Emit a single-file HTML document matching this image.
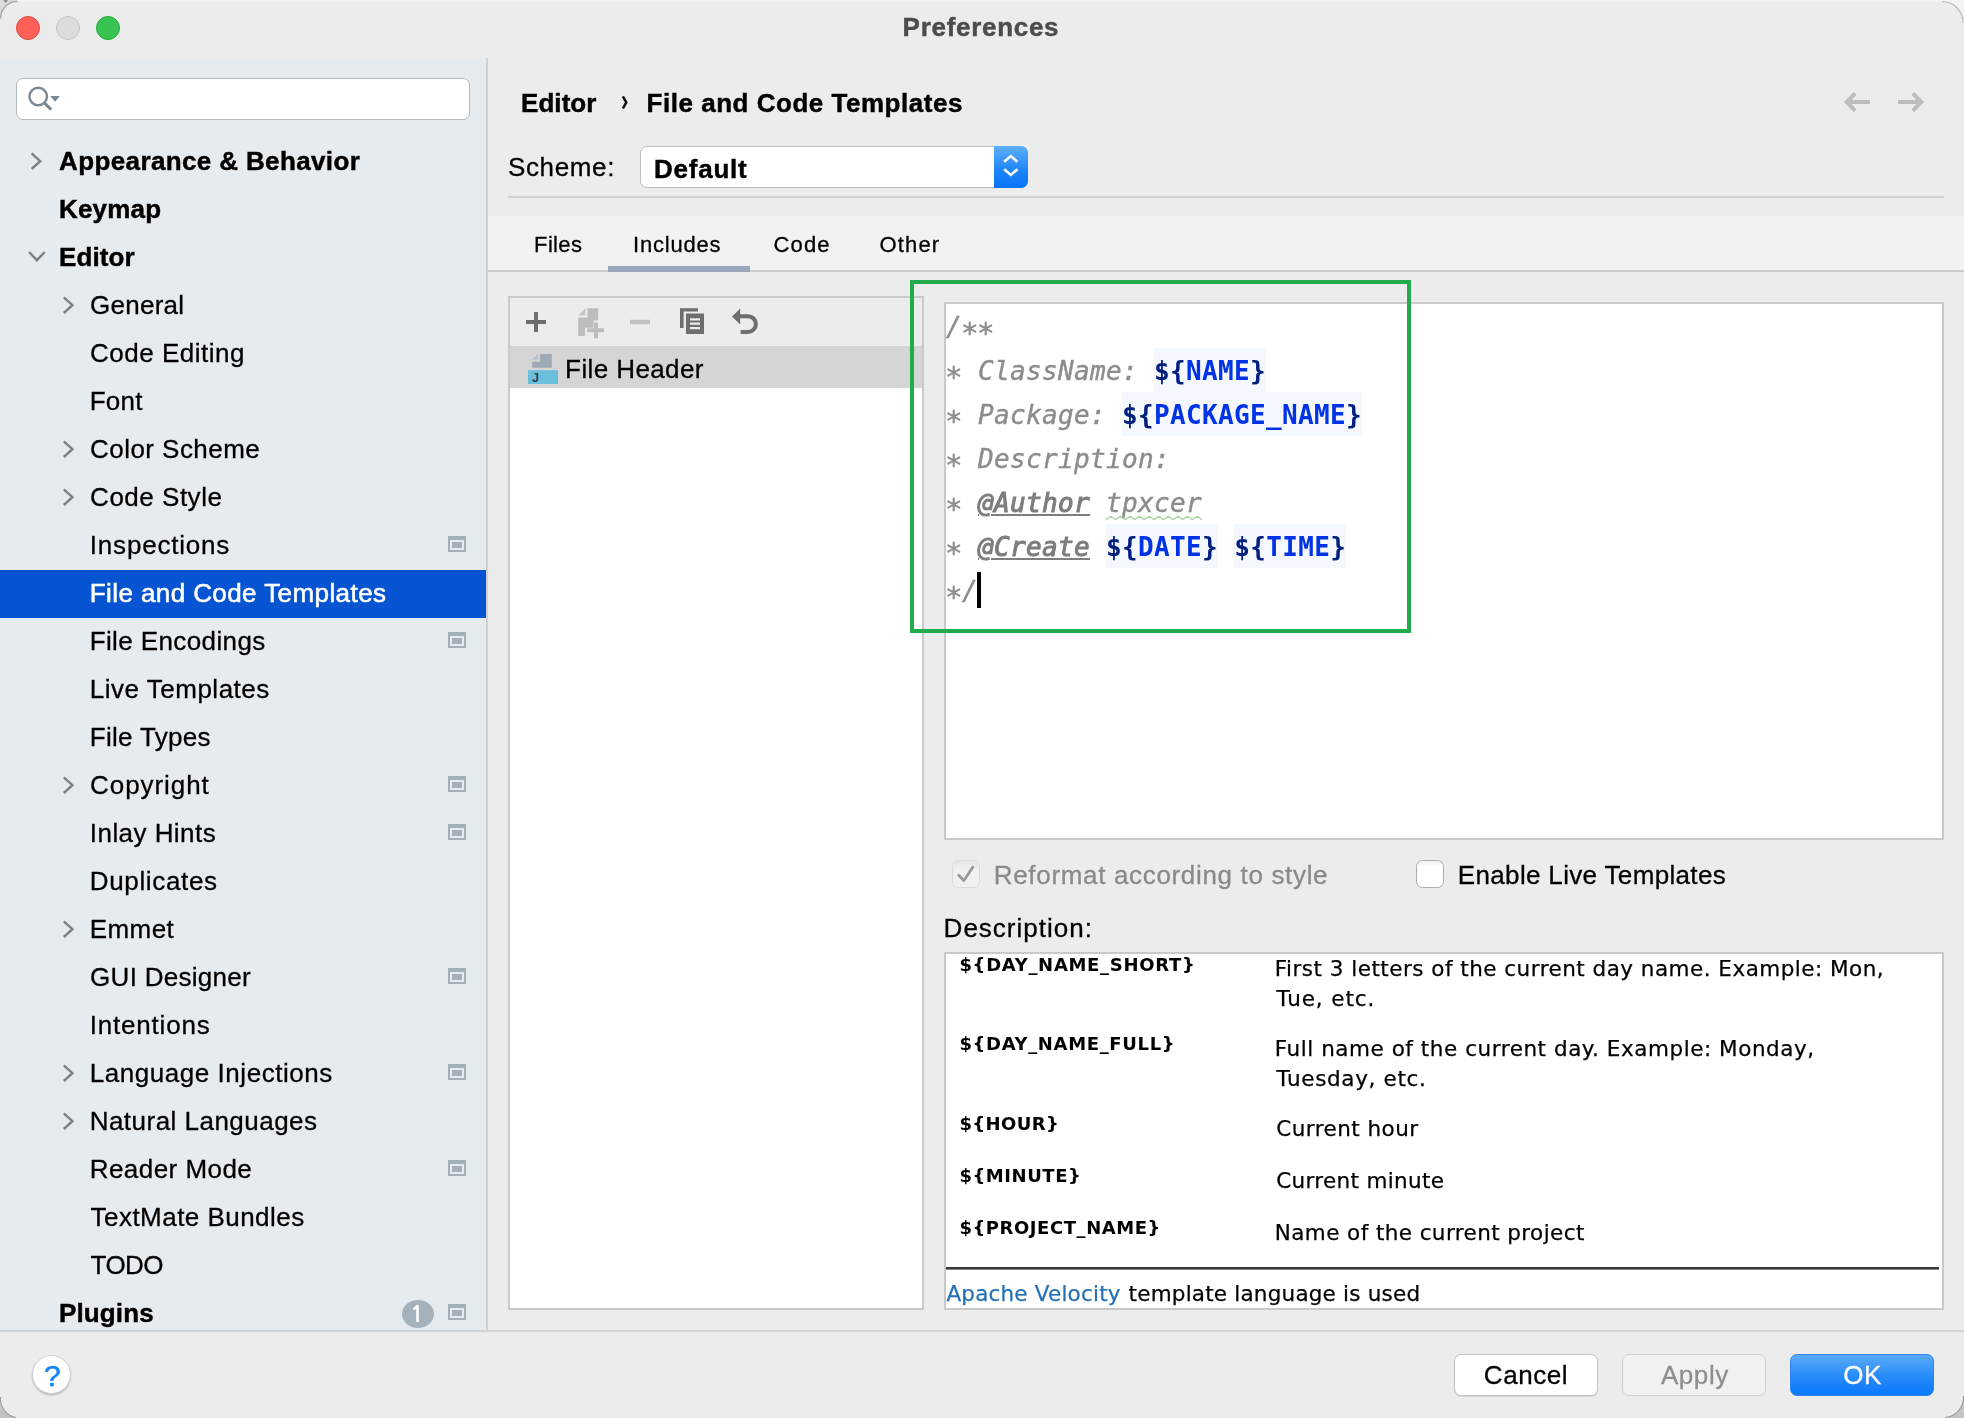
<!DOCTYPE html>
<html lang="en">
<head>
<meta charset="utf-8">
<title>Preferences</title>
<style>
html,body{margin:0;padding:0}
body{width:1964px;height:1418px;overflow:hidden;background:#ececec;position:relative;font-family:"Liberation Sans",sans-serif;font-size:26px;color:#000}
.a{position:absolute;box-sizing:border-box}
.t{position:absolute;white-space:pre;display:block}
svg{position:absolute;overflow:visible}
.code{will-change:transform;position:absolute;left:946px;top:305.3px;font:400 26px/44px "DejaVu Sans Mono","Liberation Mono",monospace;letter-spacing:.35px;white-space:pre;color:#8c8c8c}
.code div{height:44px}
.code i{font-style:italic;-webkit-text-stroke:.4px}
.code .as{display:inline-block;width:16px;transform:translateY(5.5px) scale(1.12);transform-origin:50% 50%}
.code b{font-weight:700;color:#00207f;font-style:normal}
.code b u{text-decoration:none;color:#0033e6}
.hl{position:absolute;height:44px;background:#f5f8fe}
.code .tag{font-weight:400;font-style:italic;color:#7d7d7d;-webkit-text-stroke:1px;text-decoration:underline;text-decoration-thickness:1.6px;text-underline-offset:1.6px}
.code .typo{}
</style>
</head>
<body>
<!-- window chrome -->
<div class="a" style="left:0;top:0;width:1964px;height:2px;background:linear-gradient(#f6f6f6,#efefef)"></div>
<svg style="left:0;top:0" width="1964" height="1418" viewBox="0 0 1964 1418">
<path d="M0 0 H17 A17 17 0 0 0 0 18.5 Z" fill="#dcdcdc"/><path d="M17.5 1.2 A17 17 0 0 0 0.6 18.5" fill="none" stroke="#a6a6a6" stroke-width="1.4"/><path d="M3.5 0 L8 0 L6.5 2.2 Q4.8 3.4 4.2 1.6 Z" fill="#8d8d8d"/>
<path d="M1964 0 H1942 A21 21 0 0 1 1963 22 L1964 22 Z" fill="#f3f3f3"/><path d="M1942 1.5 A21 21 0 0 1 1963 23" fill="none" stroke="#b8b8b8" stroke-width="1.2"/>
<path d="M0 1418 V1397 A19 19 0 0 0 16 1418 Z" fill="#c2c2c2"/><path d="M0.5 1397 A19 19 0 0 0 16 1417.5" fill="none" stroke="#9a9a9a" stroke-width="1.2"/>
<path d="M1964 1418 V1396 A20 20 0 0 1 1945 1418 Z" fill="#c4c4c4"/><path d="M1963.5 1396 A20 20 0 0 1 1945 1417.5" fill="none" stroke="#9c9c9c" stroke-width="1.2"/>
</svg>
<div class="a" style="left:16px;top:15.5px;width:24px;height:24px;border-radius:50%;background:#ff6159;border:1px solid #e2463e"></div>
<div class="a" style="left:56px;top:15.5px;width:24px;height:24px;border-radius:50%;background:#dcdcdc;border:1px solid #c4c4c4"></div>
<div class="a" style="left:96px;top:15.5px;width:24px;height:24px;border-radius:50%;background:#39c352;border:1px solid #22ab31"></div>

<!-- sidebar -->
<div class="a" style="left:0;top:58px;width:488px;height:1272px;background:#e6ebf0;border-right:2px solid #d0d0d0"></div>
<div class="a" style="left:16px;top:78px;width:454px;height:41.5px;background:#fff;border:1.6px solid #b3b8bd;border-radius:7px"></div>
<svg style="left:24px;top:82px" width="40" height="32" viewBox="0 0 40 32"><circle cx="14.2" cy="14.5" r="8.8" fill="none" stroke="#7d8891" stroke-width="2.4"/><path d="M20.6 21.2 L27.2 27.6" stroke="#7d8891" stroke-width="3" fill="none"/><path d="M26.2 14 L35.8 14 L31 19.8 Z" fill="#7d8891"/></svg>
<div class="a" style="left:0;top:570px;width:486px;height:48px;background:#0654d1"></div>
<svg style="left:0;top:0" width="100" height="1330" viewBox="0 0 100 1330"><g fill="none" stroke="#7f7f7f" stroke-width="2.4"><path d="M31.6 153.4 L40.2 161.2 L31.6 169.0"/><path d="M29.1 252.0 L36.9 260.2 L44.7 252.0"/><path d="M63.8 297.4 L72.4 305.2 L63.8 313.0"/><path d="M63.8 441.4 L72.4 449.2 L63.8 457.0"/><path d="M63.8 489.4 L72.4 497.2 L63.8 505.0"/><path d="M63.8 777.4 L72.4 785.2 L63.8 793.0"/><path d="M63.8 921.4 L72.4 929.2 L63.8 937.0"/><path d="M63.8 1065.4 L72.4 1073.2 L63.8 1081.0"/><path d="M63.8 1113.4 L72.4 1121.2 L63.8 1129.0"/></g></svg>
<svg style="left:0;top:0" width="486" height="1330" viewBox="0 0 486 1330"><g fill="#a4b1b9"><path d="M448 536h18v16h-18z M450 540v10h14v-10z M452 542h10v6h-10z" fill-rule="evenodd"/><path d="M448 632h18v16h-18z M450 636v10h14v-10z M452 638h10v6h-10z" fill-rule="evenodd"/><path d="M448 776h18v16h-18z M450 780v10h14v-10z M452 782h10v6h-10z" fill-rule="evenodd"/><path d="M448 824h18v16h-18z M450 828v10h14v-10z M452 830h10v6h-10z" fill-rule="evenodd"/><path d="M448 968h18v16h-18z M450 972v10h14v-10z M452 974h10v6h-10z" fill-rule="evenodd"/><path d="M448 1064h18v16h-18z M450 1068v10h14v-10z M452 1070h10v6h-10z" fill-rule="evenodd"/><path d="M448 1160h18v16h-18z M450 1164v10h14v-10z M452 1166h10v6h-10z" fill-rule="evenodd"/><path d="M448 1304h18v16h-18z M450 1308v10h14v-10z M452 1310h10v6h-10z" fill-rule="evenodd"/></g><ellipse cx="418" cy="1314" rx="16" ry="14" fill="#a6b2bb"/></svg>

<!-- bottom bar -->
<div class="a" style="left:0;top:1330px;width:1964px;height:2px;background:#d2d2d2"></div>
<div class="a" style="left:31.6px;top:1355.2px;width:39px;height:39px;border-radius:50%;background:#fff;border:1px solid #d0d0d0;box-shadow:0 1.5px 2px rgba(0,0,0,.2)"></div>
<div class="a" style="left:1454px;top:1354px;width:144px;height:42px;border-radius:7px;background:#fff;border:1.5px solid #c2c2c2;box-shadow:0 1px 1px rgba(0,0,0,.10)"></div>
<div class="a" style="left:1622px;top:1354px;width:144px;height:42px;border-radius:7px;background:#f1f1f1;border:1.5px solid #d0d0d0"></div>
<div class="a" style="left:1790px;top:1354px;width:144px;height:42px;border-radius:7px;background:linear-gradient(#5caaf8,#2a8df9 50%,#0a78fb);border:1px solid #2a86f0"></div>

<!-- header -->
<svg style="left:616px;top:94px" width="18" height="18" viewBox="0 0 18 18"><path d="M6.9 2.3 L10.3 8.4 L6.9 14.5" fill="none" stroke="#111" stroke-width="2.5"/></svg>
<svg style="left:1840px;top:88px" width="90" height="28" viewBox="0 0 90 28"><g fill="none" stroke="#bdbdbd" stroke-width="4"><path d="M30 14 H7.5 M15.2 5.4 L6.6 14 L15.2 22.6"/><path d="M58 14 H80.5 M72.8 5.4 L81.4 14 L72.8 22.6"/></g></svg>
<div class="a" style="left:640px;top:146px;width:388px;height:41.6px;border-radius:7px;background:#fff;border:1.5px solid #bdbdbd"></div>
<div class="a" style="left:994px;top:146px;width:34px;height:41.6px;border-radius:0 7px 7px 0;background:linear-gradient(#5fb0fb,#1c84fa 60%,#0a74f5)"></div>
<svg style="left:994px;top:146px" width="34" height="42" viewBox="0 0 34 42"><g fill="none" stroke="#fff" stroke-width="2.6" stroke-linejoin="miter"><path d="M10.2 15.8 L16.8 10.1 L23.4 15.8"/><path d="M10.2 23.2 L16.8 28.9 L23.4 23.2"/></g></svg>
<div class="a" style="left:508px;top:196px;width:1436px;height:2px;background:#d1d1d1"></div>
<div class="a" style="left:488px;top:216px;width:1476px;height:56px;background:#f2f2f2;border-bottom:2px solid #cdcdcd"></div>
<div class="a" style="left:608px;top:266px;width:142px;height:6px;background:#9aa7bc"></div>

<!-- list panel -->
<div class="a" style="left:508px;top:296px;width:416px;height:1014px;background:#fff;border:2px solid #c9c9c9"></div>
<div class="a" style="left:510px;top:298px;width:412px;height:48px;background:#ececec"></div>
<div class="a" style="left:510px;top:346px;width:412px;height:42px;background:#d5d5d5"></div>
<svg style="left:520px;top:300px" width="250" height="92" viewBox="520 300 250 92">
<path d="M526 322 H546 M536 312 V332" stroke="#6e6e6e" stroke-width="4" fill="none"/>
<g fill="#bdbdbd"><path d="M587.4 308.2 H598.2 V320.6 H593.6 V327.8 H585 V336 H578.2 V317.4 H587.4 Z"/><path d="M578.2 315.4 L585.4 308.2 V315.4 Z" fill="#c6c6c6"/><path d="M587.2 328.2 H594 V322.4 H598 V328.2 H604 V332.2 H598 V338.2 H594 V332.2 H587.2 Z"/></g>
<path d="M630 322 H650" stroke="#c0c0c0" stroke-width="4.4" fill="none"/>
<g fill="#6e6e6e"><path d="M680 308.2 H698 V311.6 H683.6 V328 H680 Z"/><path d="M686 313.4 H704 V334 H686 Z M690 318.2 V320.4 H700 V318.2 Z M690 322.6 V324.8 H700 V322.6 Z M690 327 V329.2 H700 V327 Z" fill-rule="evenodd"/></g>
<path d="M732 316.4 L740.2 308.4 V324.4 Z" fill="#6e6e6e"/>
<path d="M739 316.2 H748 A7.9 7.9 0 0 1 748 332 H740.6" stroke="#6e6e6e" stroke-width="4" fill="none"/>
<path d="M539.9 354 H551.8 V367.8 H532.2 V361.7 H539.9 Z" fill="#9eaab5"/><path d="M532.4 359.6 L538 354 V359.6 Z" fill="#b4bec7"/>
<rect x="528" y="370.2" width="30" height="13.8" fill="#6cbedd"/>
<text x="532" y="381.9" font-family="'Liberation Sans',sans-serif" font-size="12.5" font-weight="700" fill="#2b4350">J</text>
</svg>

<!-- editor -->
<div class="a" style="left:944px;top:302px;width:1000px;height:538px;background:#fff;border:2px solid #c9c9c9"></div>
<div class="hl" style="left:1154px;top:348px;width:112px"></div><div class="hl" style="left:1122px;top:392px;width:240px"></div><div class="hl" style="left:1106px;top:524px;width:112px"></div><div class="hl" style="left:1234px;top:524px;width:112px"></div>
<div class="code"><div><i>/<span class="as">*</span><span class="as">*</span></i></div><div><i><span class="as">*</span> ClassName: </i><b>${<u>NAME</u>}</b></div><div><i><span class="as">*</span> Package: </i><b>${<u>PACKAGE_NAME</u>}</b></div><div><i><span class="as">*</span> Description:</i></div><div><i><span class="as">*</span> </i><span class="tag">@Author</span><i> </i><i class="typo">tpxcer</i></div><div><i><span class="as">*</span> </i><span class="tag">@Create</span><i> </i><b>${<u>DATE</u>}</b><i> </i><b>${<u>TIME</u>}</b></div><div><i><span class="as">*</span>/</i></div></div>
<svg style="left:0;top:0" width="1964" height="600" viewBox="0 0 1964 600"><polyline points="1106.0,519.6 1110.8,516.2 1115.6,519.6 1120.4,516.2 1125.2,519.6 1130.0,516.2 1134.8,519.6 1139.6,516.2 1144.4,519.6 1149.2,516.2 1154.0,519.6 1158.8,516.2 1163.6,519.6 1168.4,516.2 1173.2,519.6 1178.0,516.2 1182.8,519.6 1187.6,516.2 1192.4,519.6 1197.2,516.2 1202.0,519.6" fill="none" stroke="#aad6a3" stroke-width="1.3"/></svg>
<div class="a" style="left:977px;top:572px;width:4px;height:36px;background:#000"></div>
<div class="a" style="left:910px;top:280px;width:501px;height:352.5px;border:4px solid #21ab4d"></div>

<!-- checkboxes -->
<div class="a" style="left:952.2px;top:860px;width:27.8px;height:27.7px;border-radius:6.5px;background:linear-gradient(#e6e6e6,#f0f0f0 35%,#f1f1f1);border:1.2px solid #dadada"></div>
<svg style="left:952px;top:860px" width="28" height="28" viewBox="0 0 28 28"><path d="M6.8 15.2 L11.9 20.6 L20.8 7.2" fill="none" stroke="#989898" stroke-width="2.8" stroke-linecap="round" stroke-linejoin="round"/></svg>
<div class="a" style="left:1416.2px;top:860px;width:27.8px;height:27.8px;border-radius:6.5px;background:linear-gradient(#f1f1f1,#fff 22%);border:1.2px solid #adadad"></div>

<!-- description -->
<div class="a" style="left:944px;top:951.5px;width:1000px;height:358.5px;background:#fff;border:2px solid #c9c9c9"></div>
<div class="a" style="left:946px;top:1267px;width:993px;height:3px;background:linear-gradient(#3a3a3a 0,#3a3a3a 55%,#b0b0b0 100%)"></div>

<div class="a" style="left:0;top:0;width:1964px;height:1418px;will-change:transform">
<span class="t" style="left:902.60px;top:6.80px;font:700 26px/40px 'Liberation Sans',sans-serif;color:#4c4c4c;letter-spacing:0.710px;-webkit-text-stroke:0.45px;">Preferences</span>
<span class="t" style="left:59.10px;top:141.30px;font:700 26px/40px 'Liberation Sans',sans-serif;color:#000;letter-spacing:0.370px;-webkit-text-stroke:0.45px;">Appearance &amp; Behavior</span>
<span class="t" style="left:59.00px;top:189.30px;font:700 26px/40px 'Liberation Sans',sans-serif;color:#000;letter-spacing:0.180px;-webkit-text-stroke:0.45px;">Keymap</span>
<span class="t" style="left:59.00px;top:237.30px;font:700 26px/40px 'Liberation Sans',sans-serif;color:#000;letter-spacing:0.080px;-webkit-text-stroke:0.45px;">Editor</span>
<span class="t" style="left:90.10px;top:285.30px;font:400 26px/40px 'Liberation Sans',sans-serif;color:#000;letter-spacing:0.233px;-webkit-text-stroke:0.3px;">General</span>
<span class="t" style="left:90.10px;top:333.30px;font:400 26px/40px 'Liberation Sans',sans-serif;color:#000;letter-spacing:0.500px;-webkit-text-stroke:0.3px;">Code Editing</span>
<span class="t" style="left:89.70px;top:381.30px;font:400 26px/40px 'Liberation Sans',sans-serif;color:#000;letter-spacing:0.267px;-webkit-text-stroke:0.3px;">Font</span>
<span class="t" style="left:90.10px;top:429.30px;font:400 26px/40px 'Liberation Sans',sans-serif;color:#000;letter-spacing:0.445px;-webkit-text-stroke:0.3px;">Color Scheme</span>
<span class="t" style="left:90.10px;top:477.30px;font:400 26px/40px 'Liberation Sans',sans-serif;color:#000;letter-spacing:0.511px;-webkit-text-stroke:0.3px;">Code Style</span>
<span class="t" style="left:89.80px;top:525.30px;font:400 26px/40px 'Liberation Sans',sans-serif;color:#000;letter-spacing:0.800px;-webkit-text-stroke:0.3px;">Inspections</span>
<span class="t" style="left:89.70px;top:573.30px;font:400 26px/40px 'Liberation Sans',sans-serif;color:#fff;letter-spacing:0.418px;-webkit-text-stroke:0.55px;">File and Code Templates</span>
<span class="t" style="left:89.70px;top:621.30px;font:400 26px/40px 'Liberation Sans',sans-serif;color:#000;letter-spacing:0.385px;-webkit-text-stroke:0.3px;">File Encodings</span>
<span class="t" style="left:89.70px;top:669.30px;font:400 26px/40px 'Liberation Sans',sans-serif;color:#000;letter-spacing:0.515px;-webkit-text-stroke:0.3px;">Live Templates</span>
<span class="t" style="left:89.70px;top:717.30px;font:400 26px/40px 'Liberation Sans',sans-serif;color:#000;letter-spacing:0.311px;-webkit-text-stroke:0.3px;">File Types</span>
<span class="t" style="left:90.10px;top:765.30px;font:400 26px/40px 'Liberation Sans',sans-serif;color:#000;letter-spacing:0.925px;-webkit-text-stroke:0.3px;">Copyright</span>
<span class="t" style="left:89.80px;top:813.30px;font:400 26px/40px 'Liberation Sans',sans-serif;color:#000;letter-spacing:0.450px;-webkit-text-stroke:0.3px;">Inlay Hints</span>
<span class="t" style="left:89.70px;top:861.30px;font:400 26px/40px 'Liberation Sans',sans-serif;color:#000;letter-spacing:0.667px;-webkit-text-stroke:0.3px;">Duplicates</span>
<span class="t" style="left:89.70px;top:909.30px;font:400 26px/40px 'Liberation Sans',sans-serif;color:#000;letter-spacing:0.450px;-webkit-text-stroke:0.3px;">Emmet</span>
<span class="t" style="left:90.10px;top:957.30px;font:400 26px/40px 'Liberation Sans',sans-serif;color:#000;letter-spacing:0.282px;-webkit-text-stroke:0.3px;">GUI Designer</span>
<span class="t" style="left:89.80px;top:1005.30px;font:400 26px/40px 'Liberation Sans',sans-serif;color:#000;letter-spacing:0.789px;-webkit-text-stroke:0.3px;">Intentions</span>
<span class="t" style="left:89.70px;top:1053.30px;font:400 26px/40px 'Liberation Sans',sans-serif;color:#000;letter-spacing:0.550px;-webkit-text-stroke:0.3px;">Language Injections</span>
<span class="t" style="left:89.70px;top:1101.30px;font:400 26px/40px 'Liberation Sans',sans-serif;color:#000;letter-spacing:0.475px;-webkit-text-stroke:0.3px;">Natural Languages</span>
<span class="t" style="left:89.70px;top:1149.30px;font:400 26px/40px 'Liberation Sans',sans-serif;color:#000;letter-spacing:0.460px;-webkit-text-stroke:0.3px;">Reader Mode</span>
<span class="t" style="left:90.60px;top:1197.30px;font:400 26px/40px 'Liberation Sans',sans-serif;color:#000;letter-spacing:0.460px;-webkit-text-stroke:0.3px;">TextMate Bundles</span>
<span class="t" style="left:90.60px;top:1245.30px;font:400 26px/40px 'Liberation Sans',sans-serif;color:#000;letter-spacing:-0.567px;-webkit-text-stroke:0.3px;">TODO</span>
<span class="t" style="left:59.00px;top:1293.30px;font:700 26px/40px 'Liberation Sans',sans-serif;color:#000;letter-spacing:0.117px;-webkit-text-stroke:0.45px;">Plugins</span>
<span class="t" style="left:409.90px;top:1294.00px;font:700 23px/40px 'NanumGothic','Liberation Sans',sans-serif;color:#fff;letter-spacing:0.000px;">1</span>
<span class="t" style="left:521.00px;top:83.00px;font:700 26px/40px 'Liberation Sans',sans-serif;color:#000;letter-spacing:0.060px;-webkit-text-stroke:0.45px;">Editor</span>
<span class="t" style="left:646.60px;top:83.00px;font:700 26px/40px 'Liberation Sans',sans-serif;color:#000;letter-spacing:0.518px;-webkit-text-stroke:0.45px;">File and Code Templates</span>
<span class="t" style="left:507.90px;top:147.10px;font:400 26px/40px 'Liberation Sans',sans-serif;color:#000;letter-spacing:0.650px;-webkit-text-stroke:0.3px;">Scheme:</span>
<span class="t" style="left:654.00px;top:148.60px;font:700 26px/40px 'Liberation Sans',sans-serif;color:#000;letter-spacing:0.767px;-webkit-text-stroke:0.45px;">Default</span>
<span class="t" style="left:534.10px;top:225.30px;font:400 22px/40px 'Liberation Sans',sans-serif;color:#000;letter-spacing:0.350px;-webkit-text-stroke:0.3px;">Files</span>
<span class="t" style="left:633.10px;top:225.30px;font:400 22px/40px 'Liberation Sans',sans-serif;color:#000;letter-spacing:0.786px;-webkit-text-stroke:0.3px;">Includes</span>
<span class="t" style="left:773.50px;top:225.30px;font:400 22px/40px 'Liberation Sans',sans-serif;color:#000;letter-spacing:1.167px;-webkit-text-stroke:0.3px;">Code</span>
<span class="t" style="left:879.60px;top:225.30px;font:400 22px/40px 'Liberation Sans',sans-serif;color:#000;letter-spacing:1.125px;-webkit-text-stroke:0.3px;">Other</span>
<span class="t" style="left:565.10px;top:348.70px;font:400 26px/40px 'Liberation Sans',sans-serif;color:#000;letter-spacing:0.400px;-webkit-text-stroke:0.3px;">File Header</span>
<span class="t" style="left:993.80px;top:854.50px;font:400 26px/40px 'Liberation Sans',sans-serif;color:#8a8a8a;letter-spacing:0.665px;-webkit-text-stroke:0.3px;">Reformat according to style</span>
<span class="t" style="left:1457.80px;top:854.50px;font:400 26px/40px 'Liberation Sans',sans-serif;color:#000;letter-spacing:0.340px;-webkit-text-stroke:0.3px;">Enable Live Templates</span>
<span class="t" style="left:943.60px;top:908.30px;font:400 26px/40px 'Liberation Sans',sans-serif;color:#000;letter-spacing:1.009px;-webkit-text-stroke:0.3px;">Description:</span>
<span class="t" style="left:959.40px;top:944.70px;font:700 18px/40px 'DejaVu Sans','Liberation Sans',sans-serif;color:#000;letter-spacing:0.700px;">${DAY_NAME_SHORT}</span>
<span class="t" style="left:959.40px;top:1024.30px;font:700 18px/40px 'DejaVu Sans','Liberation Sans',sans-serif;color:#000;letter-spacing:0.653px;">${DAY_NAME_FULL}</span>
<span class="t" style="left:959.40px;top:1104.30px;font:700 18px/40px 'DejaVu Sans','Liberation Sans',sans-serif;color:#000;letter-spacing:0.400px;">${HOUR}</span>
<span class="t" style="left:959.40px;top:1156.30px;font:700 18px/40px 'DejaVu Sans','Liberation Sans',sans-serif;color:#000;letter-spacing:0.550px;">${MINUTE}</span>
<span class="t" style="left:959.40px;top:1208.40px;font:700 18px/40px 'DejaVu Sans','Liberation Sans',sans-serif;color:#000;letter-spacing:0.557px;">${PROJECT_NAME}</span>
<span class="t" style="left:1274.80px;top:948.70px;font:400 21.5px/40px 'DejaVu Sans','Liberation Sans',sans-serif;color:#000;letter-spacing:0.481px;-webkit-text-stroke:0.25px;">First 3 letters of the current day name. Example: Mon,</span>
<span class="t" style="left:1276.40px;top:978.70px;font:400 21.5px/40px 'DejaVu Sans','Liberation Sans',sans-serif;color:#000;letter-spacing:0.912px;-webkit-text-stroke:0.25px;">Tue, etc.</span>
<span class="t" style="left:1274.80px;top:1028.50px;font:400 21.5px/40px 'DejaVu Sans','Liberation Sans',sans-serif;color:#000;letter-spacing:0.547px;-webkit-text-stroke:0.25px;">Full name of the current day. Example: Monday,</span>
<span class="t" style="left:1276.40px;top:1058.60px;font:400 21.5px/40px 'DejaVu Sans','Liberation Sans',sans-serif;color:#000;letter-spacing:0.675px;-webkit-text-stroke:0.25px;">Tuesday, etc.</span>
<span class="t" style="left:1276.20px;top:1108.50px;font:400 21.5px/40px 'DejaVu Sans','Liberation Sans',sans-serif;color:#000;letter-spacing:0.464px;-webkit-text-stroke:0.25px;">Current hour</span>
<span class="t" style="left:1276.20px;top:1160.50px;font:400 21.5px/40px 'DejaVu Sans','Liberation Sans',sans-serif;color:#000;letter-spacing:0.338px;-webkit-text-stroke:0.25px;">Current minute</span>
<span class="t" style="left:1274.80px;top:1212.70px;font:400 21.5px/40px 'DejaVu Sans','Liberation Sans',sans-serif;color:#000;letter-spacing:0.408px;-webkit-text-stroke:0.25px;">Name of the current project</span>
<span class="t" style="left:946.40px;top:1274.40px;font:400 21.5px/40px 'DejaVu Sans','Liberation Sans',sans-serif;color:#2470b3;letter-spacing:0.193px;-webkit-text-stroke:0.25px;">Apache Velocity</span>
<span class="t" style="left:1128.60px;top:1274.40px;font:400 21.5px/40px 'DejaVu Sans','Liberation Sans',sans-serif;color:#000;letter-spacing:0.204px;-webkit-text-stroke:0.25px;">template language is used</span>
<span class="t" style="left:1483.80px;top:1355.00px;font:400 26px/40px 'Liberation Sans',sans-serif;color:#000;letter-spacing:0.580px;-webkit-text-stroke:0.3px;">Cancel</span>
<span class="t" style="left:1660.90px;top:1355.00px;font:400 26px/40px 'Liberation Sans',sans-serif;color:#8e8e8e;letter-spacing:0.575px;-webkit-text-stroke:0.3px;">Apply</span>
<span class="t" style="left:1843.20px;top:1355.00px;font:400 26px/40px 'Liberation Sans',sans-serif;color:#fff;letter-spacing:0.600px;-webkit-text-stroke:0.3px;">OK</span>
<span class="t" style="left:44.00px;top:1355.80px;font:400 30px/40px 'Liberation Sans',sans-serif;color:#1083fd;letter-spacing:0.000px;-webkit-text-stroke:0.5px #1083fd">?</span>
</div>
</body>
</html>
